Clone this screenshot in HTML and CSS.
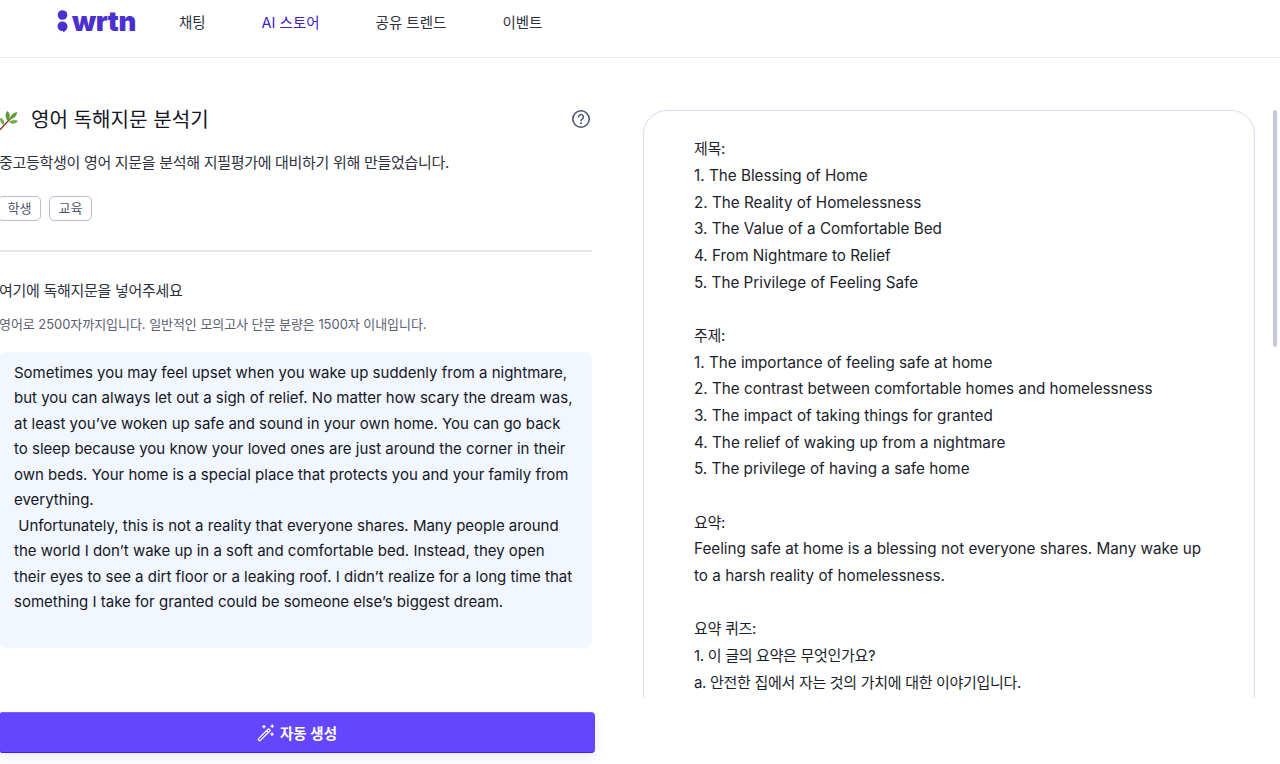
FILE: index.html
```html
<!DOCTYPE html>
<html lang="ko">
<head>
<meta charset="utf-8">
<title>wrtn</title>
<link rel="stylesheet" href="styles.css">
</head>
<body>
<header class="topbar">
  <div class="logo">
    <svg class="logo-mark" width="11" height="23" viewBox="0 0 11 23"><circle cx="5.5" cy="5" r="4.8" fill="#4c2fd0"/><path d="M5.5 11.5a5 5 0 0 1 5 5c0 2.8-2.4 5-4.6 6 .5-1 .4-1.6-.4-1.6a4.7 4.7 0 0 1-5-4.6 4.9 4.9 0 0 1 5-4.8z" fill="#4c2fd0"/></svg>
    <span class="logo-text">wrtn</span>
  </div>
  <nav class="nav">
    <a class="nav-item">채팅</a>
    <a class="nav-item nav-store">AI 스토어</a>
    <a class="nav-item">공유 트렌드</a>
    <a class="nav-item">이벤트</a>
  </nav>
</header>
<main class="main">
  <section class="left">
    <div class="title-row">
      <svg class="herb" width="20" height="20" viewBox="0 0 20 20"><path d="M1 20C5 15 10 10 16 4" stroke="#8a4032" stroke-width="1.5" fill="none"/><path d="M9 11C6 8 6 4 8 1c3 2 4 6 1 10zM11 9c0-3 3-6 7-7 0 4-3 7-7 7z" fill="#5c9a3a"/><path d="M10 12c2-2 6-3 9-1-2 3-6 4-9 1zM5 15C2 14 1 11 1 8c3 0 5 3 4 7z" fill="#79ad4c"/></svg>
      <h1 class="title">영어 독해지문 분석기</h1>
      <svg class="help" width="20" height="20" viewBox="0 0 20 20"><circle cx="10" cy="10" r="8.2" fill="none" stroke="#4f5670" stroke-width="1.6"/><path d="M7.6 8a2.4 2.4 0 1 1 3.6 2.1c-.8.5-1.2.9-1.2 1.7" fill="none" stroke="#4f5670" stroke-width="1.5" stroke-linecap="round"/><circle cx="10" cy="14.3" r="1" fill="#4f5670"/></svg>
    </div>
    <p class="desc">중고등학생이 영어 지문을 분석해 지필평가에 대비하기 위해 만들었습니다.</p>
    <div class="tags"><span class="tag">학생</span><span class="tag">교육</span></div>
    <hr class="rule">
    <h2 class="label">여기에 독해지문을 넣어주세요</h2>
    <p class="hint">영어로 2500자까지입니다. 일반적인 모의고사 단문 분량은 1500자 이내입니다.</p>
    <div class="passage">
      <p>Sometimes you may feel upset when you wake up suddenly from a nightmare, but you can always let out a sigh of relief. No matter how scary the dream was, at least you’ve woken up safe and sound in your own home. You can go back to sleep because you know your loved ones are just around the corner in their own beds. Your home is a special place that protects you and your family from everything.</p>
      <p>&nbsp;Unfortunately, this is not a reality that everyone shares. Many people around the world I don’t wake up in a soft and comfortable bed. Instead, they open their eyes to see a dirt floor or a leaking roof. I didn’t realize for a long time that something I take for granted could be someone else’s biggest dream.</p>
    </div>
    <button class="generate">
      <svg width="18" height="18" viewBox="0 0 18 18" fill="none" stroke="#fff" stroke-width="1.3" stroke-linejoin="round" stroke-linecap="round"><path d="M1.6 14.6 11 5.2a1 1 0 0 1 1.4 0l.4.4a1 1 0 0 1 0 1.4l-9.4 9.4a1 1 0 0 1-1.4 0l-.4-.4a1 1 0 0 1 0-1.4zM9.6 6.6l1.8 1.8"/><path d="M7 1.5v2.4M5.8 2.7h2.4M15.2 1v2.4M14 2.2h2.4M15 9v2.4M13.8 10.2h2.4"/></svg>
      <span>자동 생성</span>
    </button>
  </section>
  <section class="right">
    <div class="result">
      <p><span class="ko">제목:</span><br>1. The Blessing of Home<br>2. The Reality of Homelessness<br>3. The Value of a Comfortable Bed<br>4. From Nightmare to Relief<br>5. The Privilege of Feeling Safe</p>
      <p><span class="ko">주제:</span><br>1. The importance of feeling safe at home<br>2. The contrast between comfortable homes and homelessness<br>3. The impact of taking things for granted<br>4. The relief of waking up from a nightmare<br>5. The privilege of having a safe home</p>
      <p><span class="ko">요약:</span><br>Feeling safe at home is a blessing not everyone shares. Many wake up to a harsh reality of homelessness.</p>
      <p><span class="ko">요약 퀴즈:</span><br><span class="ko">1. 이 글의 요약은 무엇인가요?</span><br><span class="ko">a. 안전한 집에서 자는 것의 가치에 대한 이야기입니다.</span></p>
    </div>
    <div class="scroll-track"><div class="scroll-thumb"></div></div>
  </section>
</main>
</body>
</html>
```
FILE: styles.css
```css
* { box-sizing: border-box; }
html, body { margin: 0; height: 764px; overflow: hidden; background: #fff; }
body { font-family: Inter, "Noto Sans CJK KR", sans-serif; color: #1b1e2b; }
p, h1, h2 { margin: 0; }

.topbar { height: 58px; border-bottom: 1px solid #e6e8f0; display: flex; align-items: flex-start; padding-left: 57px; }
.logo { display: flex; align-items: center; gap: 4px; height: 42px; color: #4c2fd0; }
.logo-mark { display: block; margin-top: 1px; }
.logo-text { font-weight: 900; font-size: 27.5px; letter-spacing: -.4px; line-height: 42px; }
.nav { display: flex; margin-left: 43px; height: 42px; align-items: center; }
.nav-item { font-size: 14.5px; font-weight: 400; color: #2e3140; white-space: nowrap; margin-right: 56px; }
.nav-store { color: #3f20c6; }

.main { display: flex; height: 706px; overflow: hidden; }
.left { width: 596px; margin-left: -1px; padding-top: 50px; display: flex; flex-direction: column; flex: none; }
.title-row { display: flex; align-items: center; height: 24px; width: 593px; }
.herb { flex: none; }
.title { font-size: 20.1px; font-weight: 400; line-height: 24px; margin-left: 12px; color: #14161f; }
.help { margin-left: auto; margin-right: 1px; margin-bottom: 2px; }
.desc { font-size: 15px; letter-spacing: -.3px; line-height: 20px; margin-top: 21px; color: #2e3140; }
.tags { display: flex; gap: 8px; margin-top: 23px; }
.tag { height: 25px; border: 1px solid #b9bdd0; border-radius: 5px; font-size: 13px; line-height: 23px; padding: 0 8.5px; color: #4f5670; background: #fff; }
.tag:first-child { margin-left: -1px; }
.rule { width: 593px; margin: 29px 0 0; border: 0; border-top: 2px solid #e4e7f4; }
.label { font-size: 15px; letter-spacing: -.28px; font-weight: 400; line-height: 20px; margin-top: 29px; color: #2e3140; }
.hint { font-size: 13px; letter-spacing: -.05px; line-height: 18px; margin-top: 14px; color: #5b6073; }
.passage { width: 593px; height: 296px; margin-top: 19px; background: #f1f6ff; border-radius: 8px; padding: 7.5px 15px 0; font-size: 15px; line-height: 25.5px; color: #14161f; }
.generate { width: 596px; height: 41px; margin-top: 64px; flex: none; border: 0; border-bottom: 1px solid #3f20e8; border-top: 1px solid #7a63ff; border-radius: 4px; background: #6446ff; color: #fff; display: flex; align-items: center; justify-content: center; gap: 5px; font: 600 14.5px Inter, "Noto Sans CJK KR", sans-serif; box-shadow: 0 4px 12px rgba(100, 70, 255, .12); }

.right { flex: 1; display: flex; align-self: flex-start; height: 640px; overflow: hidden; padding-left: 48px; padding-top: 52px; min-width: 0; }
.result { width: 612px; height: 660px; flex: none; border: 1px solid #d9ddf0; border-radius: 24px; padding: 25.3px 50px 0; font-size: 15.25px; line-height: 26.67px; color: #1b1e2b; }
.result p { margin-bottom: 26.67px; }
.ko { font-size: 15px; letter-spacing: -.3px; }
.scroll-track { margin-left: 18px; width: 4px; }
.scroll-thumb { width: 4px; height: 237px; background: #c3c8dd; border-radius: 2px; }
```
